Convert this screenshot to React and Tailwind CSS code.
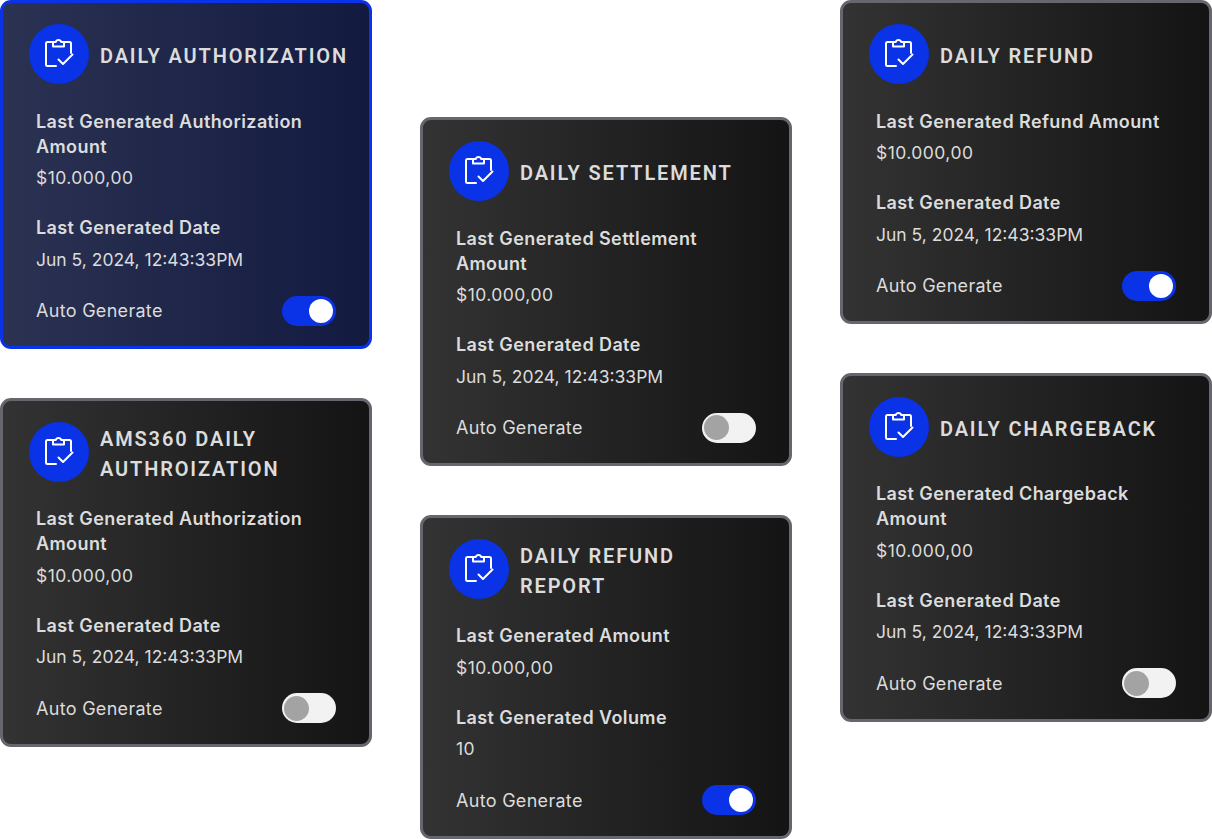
const BODY = "font-['Inter','Noto_Sans',sans-serif]";

function ClipboardIcon() {
  return (
    <div className="w-[60px] h-[60px] rounded-full bg-[#0a32e6] shrink-0">
      <svg width="60" height="60" viewBox="0 0 60 60" fill="none" stroke="white" strokeWidth="2" strokeLinecap="round" strokeLinejoin="round">
        <path d="M24 18h-5.500a1.500 1.500 0 0 0-1.500 1.500v21a1.500 1.500 0 0 0 1.500 1.500H27" />
        <path d="M35 18h5.500a1.500 1.500 0 0 1 1.500 1.500V29" />
        <path d="M24 22.500V18h2.800a2.800 2.800 0 0 1 5.400 0H35v4.500z" />
        <path d="M29.500 35.500l4.500 4.500 9.500-9.500" />
      </svg>
    </div>
  );
}

function Toggle({ on }) {
  if (on) {
    return (
      <div className="w-[54px] h-[30px] rounded-full bg-[#0a32e6] flex items-center justify-end pr-[3px]">
        <div className="w-6 h-6 rounded-full bg-white" />
      </div>
    );
  }
  return (
    <div className="w-[54px] h-[30px] rounded-full bg-[#f2f2f2] flex items-center pl-[2px]">
      <div className="w-[25px] h-[25px] rounded-full bg-[#a3a3a3]" />
    </div>
  );
}

function Card({ title, rows, on, active }) {
  return (
    <div
      className={`w-[372px] rounded-[11px] border-[3px] pt-[21px] pb-[20.500px] pl-[26px] pr-[14px] text-[#dcdcdc]
        ${active
          ? "border-[#0a32e6] bg-gradient-to-r from-[#2b3252] to-[#131a40]"
          : "border-[#66666f] bg-gradient-to-r from-[#333333] to-[#141414]"}`}
    >
      <div className="flex items-center gap-[11px]">
        <ClipboardIcon />
        <h3 className="font-['Roboto',sans-serif] text-[20px] leading-[30px] pt-[2px] -mb-[2px] font-semibold tracking-[1.850px] uppercase whitespace-pre-line">{title}</h3>
      </div>

      <div className={`${BODY} pl-[7px] pr-[19px] mt-[24.500px]`}>
        {rows.map(([label, value], i) => (
          <div key={i} className={i > 0 ? "mt-[25px]" : ""}>
            <div className="text-[18px] leading-[25px] font-semibold tracking-[0.4px]">{label}</div>
            <div className={`text-[17.500px] leading-6 mt-[7.500px] ${value === DATE ? "" : "tracking-[0.45px]"}`}>{value}</div>
          </div>
        ))}
        <div className="flex items-center justify-between mt-[24px]">
          <span className="text-[18px] tracking-[0.3px]">Auto Generate</span>
          <Toggle on={on} />
        </div>
      </div>
    </div>
  );
}

const DATE = "Jun 5, 2024, 12:43:33PM";
const AMT = "$10.000,00";

export default function App() {
  return (
    <div className="w-[1212px] h-[839px] bg-white flex gap-12 overflow-hidden">
      <div className="flex flex-col gap-[48.500px]">
        <Card active on title="Daily Authorization" rows={[["Last Generated Authorization Amount", AMT], ["Last Generated Date", DATE]]} />
        <Card title="AMS360 Daily Authroization" rows={[["Last Generated Authorization Amount", AMT], ["Last Generated Date", DATE]]} />
      </div>
      <div className="flex flex-col gap-[48.500px] pt-[117px]">
        <Card title="Daily Settlement" rows={[["Last Generated Settlement Amount", AMT], ["Last Generated Date", DATE]]} />
        <Card on title={"Daily Refund\nReport"} rows={[["Last Generated Amount", AMT], ["Last Generated Volume", "10"]]} />
      </div>
      <div className="flex flex-col gap-[48.500px]">
        <Card on title="Daily Refund" rows={[["Last Generated Refund Amount", AMT], ["Last Generated Date", DATE]]} />
        <Card title="Daily Chargeback" rows={[["Last Generated Chargeback Amount", AMT], ["Last Generated Date", DATE]]} />
      </div>
    </div>
  );
}
